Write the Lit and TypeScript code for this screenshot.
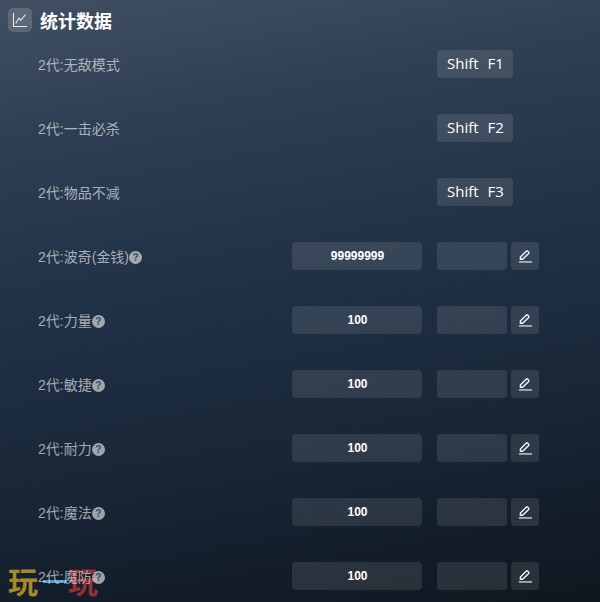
import { LitElement, html, css, svg } from "lit";
import { customElement } from "lit/decorators.js";

const hotkeys = [
  ["2代:无敌模式", "F1"],
  ["2代:一击必杀", "F2"],
  ["2代:物品不减", "F3"],
];
const values = [
  ["2代:波奇(金钱)", "99999999"],
  ["2代:力量", "100"],
  ["2代:敏捷", "100"],
  ["2代:耐力", "100"],
  ["2代:魔法", "100"],
  ["2代:魔防", "100"],
];

const pencil = svg`<svg width="14" height="14" viewBox="0 0 14 14" fill="none" stroke="currentColor" stroke-width="1.4"><path d="M2.4 10.2V8.1L8.4 2.1a.8.8 0 0 1 1.1 0l1.2 1.2a.8.8 0 0 1 0 1.1L4.6 10.2H2.4Z"/><path d="M1 12.9H14" stroke="#b9bec5" stroke-width="1.6"/></svg>`;

@customElement("app-root")
export class AppRoot extends LitElement {
  static styles = css`
    :host {
      display: block;
      width: 600px;
      height: 602px;
      overflow: hidden;
      position: relative;
      isolation: isolate;
      background: linear-gradient(170deg, #414f62 0%, #2f3f53 20%, #1f2f43 50%, #172434 75%, #0f161f 100%);
      font-family: "Noto Sans CJK SC", "Liberation Sans", sans-serif;
    }
    .head {
      display: flex;
      align-items: center;
      gap: 8px;
      height: 24px;
      padding: 8px 0 1px 8px;
      color: #fff;
      font-size: 18px;
      font-weight: 700;
      line-height: 24px;
    }
    .badge {
      width: 24px;
      height: 24px;
      border-radius: 5px;
      background: rgba(255, 255, 255, 0.16);
      display: flex;
      align-items: center;
      justify-content: center;
      color: #e6e9ec;
    }
    .rows {
      padding-top: 17px;
    }
    .row {
      height: 28px;
      margin-bottom: 36px;
      display: flex;
      align-items: center;
      padding-left: 38px;
    }
    .label {
      flex: 1;
      display: flex;
      align-items: center;
      height: 28px;
      color: rgba(255, 255, 255, 0.6);
      font-size: 14px;
      font-family: "Liberation Sans", "Noto Sans CJK SC", sans-serif;
    }
    .help {
      width: 13px;
      height: 13px;
      margin-top: 2px;
      border-radius: 50%;
      background: rgba(255, 255, 255, 0.58);
      color: #3a4a5c;
      font-size: 10px;
      font-weight: 700;
      line-height: 13px;
      text-align: center;
    }
    .key {
      width: 76px;
      height: 28px;
      box-sizing: border-box;
      margin-right: 87px;
      padding-left: 10px;
      border-radius: 4px;
      background: rgba(255, 255, 255, 0.1);
      color: #fff;
      font-family: "Open Sans", sans-serif;
      font-size: 15px;
      word-spacing: 0.5px;
      line-height: 27px;
      white-space: pre;
    }
    .val {
      width: 130px;
      height: 28px;
      margin-right: 15px;
      border-radius: 4px;
      background: rgba(255, 255, 255, 0.1);
      color: #fff;
      font-family: "Liberation Sans", sans-serif;
      font-size: 12px;
      font-weight: 700;
      line-height: 28px;
      text-align: center;
      padding-left: 1px;
      box-sizing: border-box;
    }
    .field {
      width: 70px;
      height: 28px;
      margin-right: 4px;
      border-radius: 4px;
      background: rgba(255, 255, 255, 0.1);
    }
    .edit {
      width: 28px;
      height: 28px;
      margin-right: 61px;
      border-radius: 4px;
      background: rgba(255, 255, 255, 0.1);
      color: #f4f5f6;
      display: flex;
      align-items: center;
      justify-content: center;
    }
    .mark {
      position: absolute;
      z-index: -1;
      left: 8px;
      top: 564px;
      width: 94px;
      height: 32px;
      display: flex;
      align-items: center;
      font-family: "Noto Sans CJK SC", sans-serif;
      font-size: 30px;
      font-weight: 700;
      line-height: 32px;
    }
    .mark .a { color: #a58a2a; }
    .mark .b { color: #8e3236; margin-left: 30px; }
    .mark i {
      position: absolute;
      left: 35px;
      top: 16px;
      width: 24px;
      height: 3px;
      background: #4d9ad0;
    }
  `;

  render() {
    return html`
      <div class="head">
        <span class="badge">
          <svg width="16" height="16" viewBox="0 0 16 16" fill="none" stroke="currentColor" stroke-width="1.1">
            <path d="M1.5 1V14.5H15" />
            <path d="M3.7 11.5L7 6L8.7 8.3L13.7 2.5" />
          </svg>
        </span>
        统计数据
      </div>
      <div class="rows">
        ${hotkeys.map(
          ([l, k]) => html`<div class="row">
            <span class="label">${l}</span>
            <span class="key">Shift  ${k}</span>
          </div>`
        )}
        ${values.map(
          ([l, v]) => html`<div class="row">
            <span class="label">${l}<span class="help">?</span></span>
            <span class="val">${v}</span>
            <span class="field"></span>
            <span class="edit">${pencil}</span>
          </div>`
        )}
      </div>
      <div class="mark"><span class="a">玩</span><i></i><span class="b">玩</span></div>
    `;
  }
}
